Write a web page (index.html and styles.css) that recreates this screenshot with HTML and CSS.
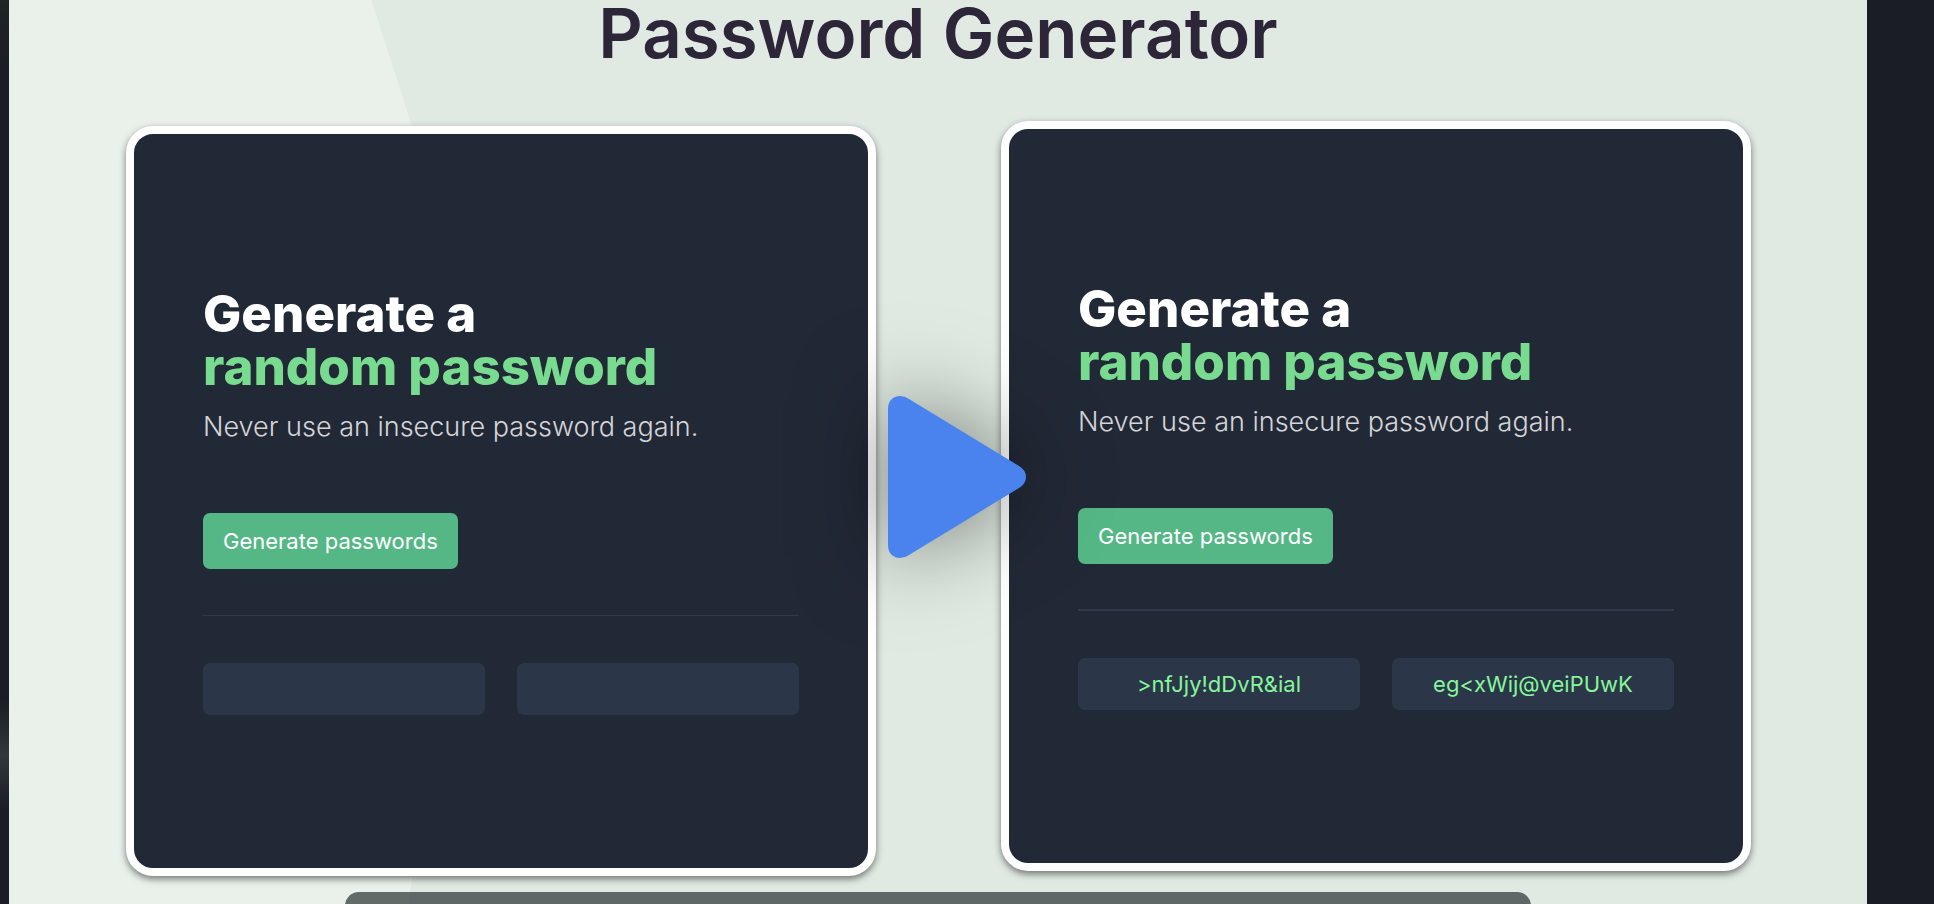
FILE: index.html
```html
<!DOCTYPE html>
<html lang="en">
<head>
<meta charset="utf-8">
<meta name="viewport" content="width=device-width, initial-scale=1">
<title>Password Generator</title>
<link rel="stylesheet" href="styles.css">
</head>
<body>
<main class="slide">
  <h1 class="title">Password Generator</h1>
  <div class="cards">
    <section class="card card-before">
      <h2 class="heading">Generate a <span class="accent">random password</span></h2>
      <p class="sub">Never use an insecure password again.</p>
      <button class="generate" type="button">Generate passwords</button>
      <hr class="rule">
      <div class="results">
        <div class="result"></div>
        <div class="result"></div>
      </div>
    </section>
    <section class="card">
      <h2 class="heading">Generate a <span class="accent">random password</span></h2>
      <p class="sub">Never use an insecure password again.</p>
      <button class="generate" type="button">Generate passwords</button>
      <hr class="rule rule-strong">
      <div class="results">
        <div class="result">&gt;nfJjy!dDvR&amp;ial</div>
        <div class="result">eg&lt;xWij@veiPUwK</div>
      </div>
    </section>
    <svg class="arrow" viewBox="0 0 138 164" aria-hidden="true">
      <path fill="#4a83ee" d="M0 14C0 6 5 1 12 1Q17 1 21 4L131 71Q138 75 138 82Q138 89 131 93L21 160Q17 163 12 163C5 163 0 158 0 150Z"/>
    </svg>
  </div>
  <div class="toolbar"></div>
</main>
</body>
</html>
```
FILE: styles.css
```css
* {
  box-sizing: border-box;
}

body {
  margin: 0;
  height: 100vh;
  overflow: hidden;
  padding: 0 67px 0 9px;
  background: linear-gradient(#1f2426 0, #1a1d25 70px, #1a1d25 700px, #32363d 755px, #1a1d25 810px) left / 9px 100% no-repeat, #1a1d25;
  font-family: Inter, "Liberation Sans", sans-serif;
}

.slide {
  position: relative;
  isolation: isolate;
  height: 100%;
  overflow: hidden;
  background: #e0eae2;
}

.slide::before {
  content: "";
  position: absolute;
  inset: 0;
  z-index: -1;
  background: #e9f1ea;
  clip-path: polygon(0 0, 19.5% 0, 21.7% 14%, 24% 50%, 21.7% 97%, 21.5% 100%, 0 100%);
}

.title {
  margin: 0;
  padding-bottom: 55px;
  font-size: 69px;
  line-height: 66px;
  font-weight: 600;
  text-align: center;
  color: #2c2638;
}

.cards {
  position: relative;
  display: flex;
  align-items: flex-start;
  gap: 125px;
  padding: 0 116px 0 117px;
}

.card {
  flex: 1;
  min-width: 0;
  aspect-ratio: 1;
  padding: 153px 69px 0;
  border: 8px solid #fff;
  border-radius: 27px;
  background: #222936;
  box-shadow: 0 3px 7px rgba(0, 0, 0, 0.5);
}

.card-before {
  margin-top: 5px;
}

.heading {
  margin: 0 0 16px;
  font-size: 51px;
  line-height: 53px;
  font-weight: 800;
  color: #fff;
}

.accent {
  display: block;
  color: #79db8f;
}

.sub {
  margin: 0 0 68px;
  font-size: 27px;
  line-height: 36px;
  font-weight: 300;
  color: #d5d4d8;
}

.generate {
  display: block;
  height: 56px;
  padding: 0 20px;
  border: 0;
  border-radius: 7px;
  background: #55b786;
  color: #fff;
  font: 400 22px/28px Inter, "Liberation Sans", sans-serif;
}

.rule {
  margin: 46px 0 47px;
  border: 0;
  height: 1px;
  background: #2f3b4c;
}

.rule-strong {
  height: 2px;
  margin: 45px 0 47px;
}

.results {
  display: grid;
  grid-template-columns: 1fr 1fr;
  gap: 32px;
}

.result {
  display: flex;
  align-items: center;
  justify-content: center;
  height: 52px;
  border-radius: 7px;
  background: #2b3648;
  color: #86f59b;
  font-size: 22px;
  line-height: 28px;
}

.arrow {
  position: absolute;
  top: 274px;
  left: calc(50% - 50px);
  width: 138px;
  height: 164px;
  overflow: visible;
  filter: drop-shadow(0 0 44px rgba(0, 0, 0, 0.5));
}

.toolbar {
  height: 60px;
  margin: 16px 336px 0;
  border-radius: 14px;
  background: rgba(31, 40, 41, 0.67);
}
```
